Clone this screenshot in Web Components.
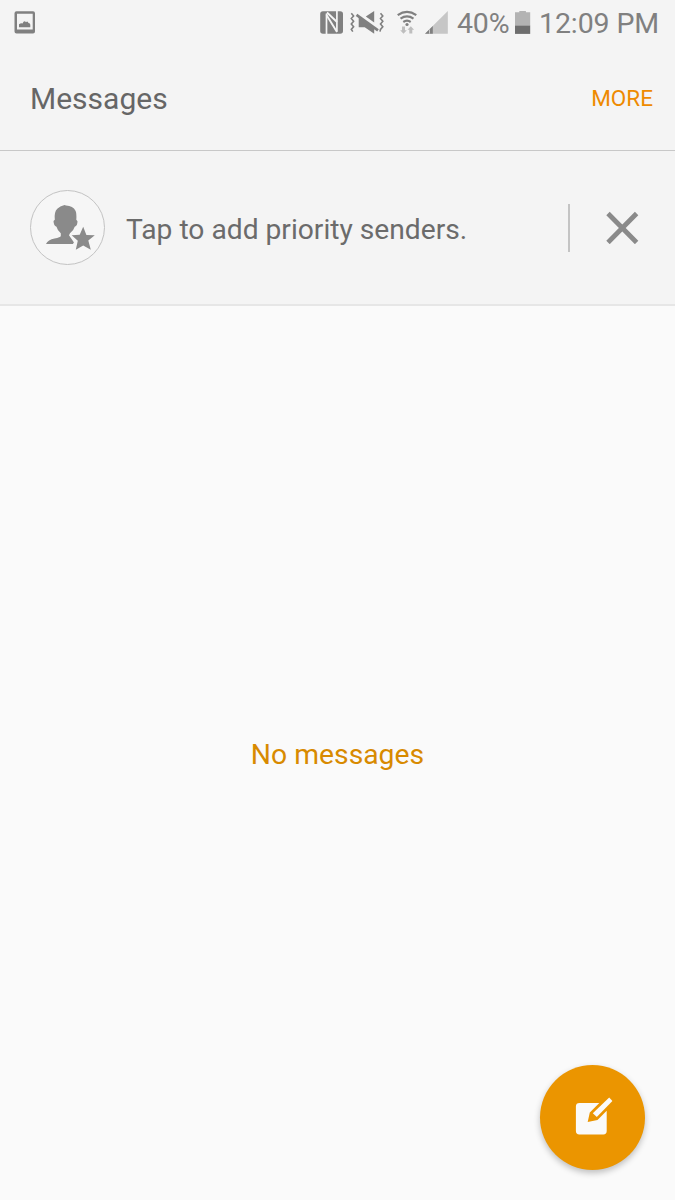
<!DOCTYPE html>
<html lang="en">
<head>
<meta charset="utf-8">
<title>Messages</title>
<style>
  body {
    margin: 0;
    font-family: Roboto, sans-serif;
    background: #fafafa;
  }
</style>
</head>
<body>
<messages-app></messages-app>

<script>
// Status bar: notification on the left, system icons and clock on the right
class StatusBar extends HTMLElement {
  constructor() {
    super();
    this.attachShadow({ mode: 'open' });
  }

  connectedCallback() {
    this.shadowRoot.innerHTML = `
      <style>
        :host {
          display: flex;
          align-items: center;
          height: 46px;
          box-sizing: border-box;
          padding: 0 13px 0 14px;
          color: #808080;
          font-size: 28.5px;
          line-height: 44px;
          white-space: nowrap;
        }
        svg { display: block; flex: none; fill: currentColor; }
        span { padding-top: 2px; }
        .spacer { flex: 1; }
        .level { width: 53px; margin-left: 8px; letter-spacing: -0.2px; }
        .battery { margin-left: 5px; }
        .clock { width: 123px; margin-left: 8px; letter-spacing: -0.1px; }
      </style>

      <svg width="22" height="26" viewBox="14 10 22 26">
        <path fill-rule="evenodd" d="M16.500 11.300h16.500a2 2 0 0 1 2 2v18.200a2 2 0 0 1-2 2h-16.500a2 2 0 0 1-2-2v-18.200a2 2 0 0 1 2-2zM17 13.800v15.700h15.700v-15.700z"/>
        <path d="M19 27.300v-3q2-1.600 3.500-.8q1.700-3.800 3.500-1.300q1.600-1.800 2.500.8q1.800.2 1.800 1.800v2.500z"/>
      </svg>
      <div class="spacer"></div>

      <!-- NFC -->
      <svg width="24" height="26" viewBox="320 10 24 26">
        <rect x="320.200" y="11.200" width="22.800" height="22.600" rx="2.800"/>
        <path d="M326.500 34v-20.500M336.900 11v20.500" fill="none" stroke="#f4f4f4" stroke-width="1.700"/>
        <path d="M327 12.500l10 9.500M326.500 15l10.500 17" fill="none" stroke="#f4f4f4" stroke-width="1.900"/>
      </svg>

      <!-- muted, vibrating -->
      <svg width="36" height="26" viewBox="350 10 36 26" style="margin-left:6px">
        <path d="M365.800 16.600l8.400-5.600v11.500z"/>
        <path d="M358.700 16.500v10.800h6l9.500 6.500v-7z"/>
        <path d="M356.500 14.900l21.500 15.400" fill="none" stroke="currentColor" stroke-width="2.700"/>
        <path d="M351.300 13.200l2.300 2.700-2.300 2.700 2.300 2.700-2.300 2.700 2.300 2.700-2.300 2.700 1.500 2.200M380.500 13.200l2.300 2.700-2.300 2.700 2.300 2.700-2.300 2.700 2.300 2.700-2.300 2.700-.5 2.200" fill="none" stroke="currentColor" stroke-width="1.600"/>
      </svg>

      <!-- wifi with traffic arrows -->
      <svg width="22" height="26" viewBox="396 10 22 26" style="margin-left:10px">
        <path d="M397.700 15.100q9.300-6.300 18.600 0M400.500 18.600q6.500-4.500 13 0M403.300 22q3.700-2.600 7.400 0" fill="none" stroke="currentColor" stroke-width="2.200"/>
        <circle cx="407" cy="24.500" r="1.600"/>
        <path fill="#bebebe" d="M402 26.500h3v3.800h1.800l-3.300 3.500-3.300-3.500h1.800zM409.300 33.500h3v-3.700h1.800l-3.300-3.600-3.300 3.600h1.800z"/>
      </svg>

      <svg width="24" height="26" viewBox="425 10 24 26" style="margin-left:7px">
        <path fill="#c6c6c6" d="M447.800 11v22.800h-22.800z"/>
        <path d="M432.800 26v7.800h-7.800z"/>
        <path fill="#c6c6c6" d="M429 29.800l1-1v5h-1z"/>
      </svg>

      <span class="level">40%</span>
      <svg class="battery" width="16" height="26" viewBox="515 10 16 26">
        <path fill="#b3b3b3" d="M515 12.300h4.300v-1.300h6.600v1.300h4.300v13.700h-15.200z"/>
        <path fill="#6e6e6e" d="M515 25.700h15.200v8.200h-15.200z"/>
      </svg>
      <span class="clock">12:09 PM</span>
    `;
  }
}
customElements.define('status-bar', StatusBar);

// Title row with a slot for its action
class AppHeader extends HTMLElement {
  constructor() {
    super();
    this.attachShadow({ mode: 'open' });
  }

  connectedCallback() {
    this.shadowRoot.innerHTML = `
      <style>
        :host {
          display: flex;
          align-items: center;
          justify-content: space-between;
          height: 105px;
          box-sizing: border-box;
          padding: 0 22px 0 30px;
          border-bottom: 1px solid #c8c8c8;
        }
        h1 {
          margin: 0;
          padding-top: 2px;
          color: #666;
          font-size: 30px;
          font-weight: 400;
          line-height: 36px;
        }
        .action {
          color: #ee8a00;
          font-size: 22.5px;
          line-height: 28px;
        }
      </style>
      <h1><slot name="title"></slot></h1>
      <div class="action"><slot></slot></div>
    `;
  }
}
customElements.define('app-header', AppHeader);

class PriorityBanner extends HTMLElement {
  constructor() {
    super();
    this.attachShadow({ mode: 'open' });
  }

  connectedCallback() {
    this.shadowRoot.innerHTML = `
      <style>
        :host {
          display: flex;
          align-items: center;
          height: 155px;
          box-sizing: border-box;
          padding: 0 36px 0 30px;
          border-bottom: 2px solid #e6e6e6;
          color: #6b6b6b;
          font-size: 28.200px;
          line-height: 36px;
        }
        svg { display: block; flex: none; }
        .text { flex: 1; margin-left: 21px; padding-top: 4px; white-space: nowrap; }
        .divider { width: 2px; height: 48px; margin-right: 36px; background: #c4c4c4; }
      </style>
      <svg width="75" height="75" viewBox="30 190 75 75">
        <circle cx="67.500" cy="227.500" r="37" fill="#f6f6f6" stroke="#c3c3c3"/>
        <path fill="#8a8a8a" d="M46 243.900q2-4 8.500-5.300q6-1.300 6.300-2.600v-2.800q-3.200-2.300-4.300-6.500q-2.800-.8-3-5.700l1.300-1.200q-.8-8 2.500-11q2.600-2.700 7.200-3.800l1.500.5q7 .3 9.500 5.300q1.300 2.800.8 9l1.200 1.400q0 4.500-2.800 5.600q-1.200 4.200-4.700 6.500l-1 2 5 7.300q-1.200 .6-.8 1.300z"/>
        <path fill="#8a8a8a" d="M83.200 226.800l3.200 8.100 8.400.3-6.500 5.400 2.500 9.200-7.600-4.400-7.400 4.300 2-9-6.100-5.400 8-.6z"/>
      </svg>
      <span class="text"><slot></slot></span>
      <span class="divider"></span>
      <svg width="33" height="33" viewBox="606 211 33 33">
        <path d="M608 213.500l28.600 29M636.600 213.500l-28.600 29" stroke="#8a8a8a" stroke-width="4.800"/>
      </svg>
    `;
  }
}
customElements.define('priority-banner', PriorityBanner);

class ComposeButton extends HTMLElement {
  constructor() {
    super();
    this.attachShadow({ mode: 'open' });
  }

  connectedCallback() {
    this.shadowRoot.innerHTML = `
      <style>
        :host {
          display: block;
          width: 105px;
          height: 105px;
          border-radius: 50%;
          background: #eb9500;
          box-shadow: 0 3px 6px rgba(0, 0, 0, 0.24);
        }
        svg { display: block; }
      </style>
      <svg width="105" height="105" viewBox="540 1065 105 105">
        <path fill="#fafafa" d="M579.500 1103h19.800l-9.500 9.500-2.100 9.500 9.800-2 9.200-9.200v20.200q0 3.400-3.400 3.400h-24q-3.400 0-3.400-3.400v-24.600q0-3.400 3.600-3.400z"/>
        <path fill="#fafafa" d="M609.200 1097.500l3.200 3.400-15.600 16-4-3.700z"/>
      </svg>
    `;
  }
}
customElements.define('compose-button', ComposeButton);

class MessagesApp extends HTMLElement {
  constructor() {
    super();
    this.attachShadow({ mode: 'open' });
  }

  connectedCallback() {
    this.shadowRoot.innerHTML = `
      <style>
        :host {
          display: flex;
          flex-direction: column;
          position: relative;
          width: 675px;
          height: 1200px;
          overflow: hidden;
        }
        .top { background: #f4f4f4; }
        .empty {
          flex: 1;
          display: flex;
          align-items: center;
          justify-content: center;
          padding-top: 4px;
          color: #d88a00;
          font-size: 28.300px;
          line-height: 36px;
        }
        /* floats over the list */
        compose-button { position: absolute; right: 30px; bottom: 30px; }
      </style>
      <div class="top">
        <status-bar></status-bar>
        <app-header>
          <span slot="title">Messages</span>
          <span>MORE</span>
        </app-header>
        <priority-banner>Tap to add priority senders.</priority-banner>
      </div>
      <div class="empty">No messages</div>
      <compose-button></compose-button>
    `;
  }
}
customElements.define('messages-app', MessagesApp);
</script>
</body>
</html>
